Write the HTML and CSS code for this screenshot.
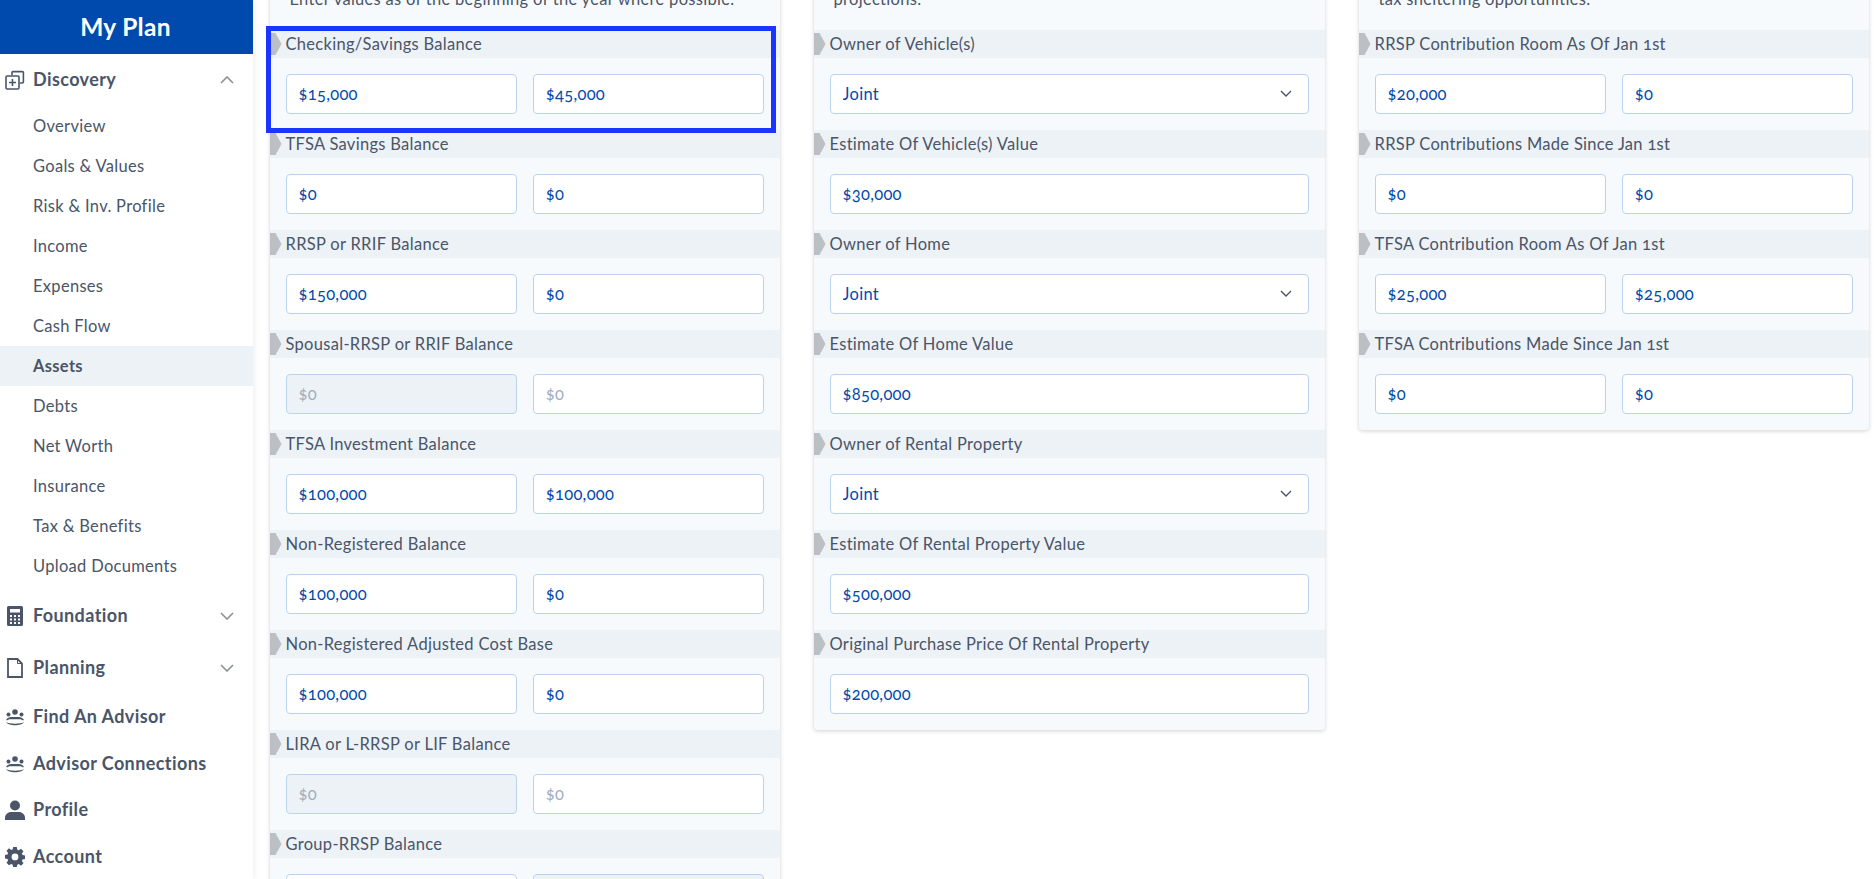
FILE: index.html
```html
<!DOCTYPE html>
<html lang="en">
<head>
    <meta charset="UTF-8">
    <meta name="viewport" content="width=device-width, initial-scale=1.0">
    <title>My Plan - Assets</title>
    <link rel="stylesheet" href="styles.css">
</head>
<body>
    <div class="app">
        <aside class="sidebar">
            <div class="brand">My Plan</div>
            <nav>
                <a class="nav-group">
                    <svg class="nav-icon" viewBox="0 0 20 20" fill="none" stroke="currentColor" stroke-width="1.6"><path d="M7 5V2.600a1 1 0 0 1 1-1h9.400a1 1 0 0 1 1 1V12a1 1 0 0 1-1 1H15"/><rect x="1" y="6" width="13" height="13" rx="1.2"/><path d="M7.500 9v7M4 12.500h7"/></svg>
                    <span>Discovery</span>
                    <svg class="nav-chevron" viewBox="0 0 14 8" fill="none" stroke="currentColor" stroke-width="1.6"><path d="M1 7l6-6 6 6"/></svg>
                </a>
                <a class="nav-item">Overview</a>
                <a class="nav-item">Goals &amp; Values</a>
                <a class="nav-item">Risk &amp; Inv. Profile</a>
                <a class="nav-item">Income</a>
                <a class="nav-item">Expenses</a>
                <a class="nav-item">Cash Flow</a>
                <a class="nav-item active">Assets</a>
                <a class="nav-item">Debts</a>
                <a class="nav-item">Net Worth</a>
                <a class="nav-item">Insurance</a>
                <a class="nav-item">Tax &amp; Benefits</a>
                <a class="nav-item">Upload Documents</a>
                <a class="nav-group foundation">
                    <svg class="nav-icon" viewBox="0 0 20 20" fill="currentColor"><path fill-rule="evenodd" d="M3.500 0h13A1.500 1.500 0 0 1 18 1.500v17a1.500 1.500 0 0 1-1.500 1.500h-13A1.500 1.500 0 0 1 2 18.500v-17A1.500 1.500 0 0 1 3.500 0zM5 3v3.500h10V3zM5 9v2h2V9zm4 0v2h2V9zm4 0v2h2V9zM5 12.500v2h2v-2zm4 0v2h2v-2zm4 0v2h2v-2zM5 16v2h2v-2zm4 0v2h2v-2zm4 0v2h2v-2z"/></svg>
                    <span>Foundation</span>
                    <svg class="nav-chevron" viewBox="0 0 14 8" fill="none" stroke="currentColor" stroke-width="1.6"><path d="M1 1l6 6 6-6"/></svg>
                </a>
                <a class="nav-group">
                    <svg class="nav-icon" viewBox="0 0 20 20" fill="none" stroke="currentColor" stroke-width="1.800"><path d="M3 1h9.500L17 5.500V19H3z"/><path d="M12.500 1v4.500H17" stroke-width="1"/></svg>
                    <span>Planning</span>
                    <svg class="nav-chevron" viewBox="0 0 14 8" fill="none" stroke="currentColor" stroke-width="1.6"><path d="M1 1l6 6 6-6"/></svg>
                </a>
                <a class="nav-link">
                    <svg class="nav-icon" viewBox="0 0 20 20" fill="currentColor"><circle cx="10" cy="5" r="2.800"/><circle cx="3.500" cy="7.500" r="2"/><circle cx="16.500" cy="7.500" r="2"/><path d="M1 13c1-2 3.500-3 5-3h8c1.500 0 4 1 5 3-1 .6-2.200.2-3-.7H4c-.8.900-2 1.300-3 .7z"/><path d="M1 15c2.500 4.400 15.500 4.400 18 0-3 2.200-15 2.200-18 0z"/></svg>
                    <span>Find An Advisor</span>
                </a>
                <a class="nav-link">
                    <svg class="nav-icon" viewBox="0 0 20 20" fill="currentColor"><circle cx="10" cy="5" r="2.800"/><circle cx="3.500" cy="7.500" r="2"/><circle cx="16.500" cy="7.500" r="2"/><path d="M1 13c1-2 3.500-3 5-3h8c1.500 0 4 1 5 3-1 .6-2.200.2-3-.7H4c-.8.900-2 1.300-3 .7z"/><path d="M1 15c2.500 4.400 15.500 4.400 18 0-3 2.200-15 2.200-18 0z"/></svg>
                    <span>Advisor Connections</span>
                </a>
                <a class="nav-link">
                    <svg class="nav-icon" viewBox="0 0 20 20" fill="currentColor"><circle cx="10" cy="5.500" r="5"/><path d="M0 20v-2.500C0 14.500 3 12 6 12h8c3 0 6 2.500 6 5.500V20z"/></svg>
                    <span>Profile</span>
                </a>
                <a class="nav-link">
                    <svg class="nav-icon" viewBox="0 0 20 20" fill="currentColor"><path fill-rule="evenodd" d="M8.200 0h3.600l.5 2.700 1.500.6L16 1.700l2.500 2.500-1.600 2.200.6 1.500 2.500.5v3.600l-2.500.5-.6 1.500 1.600 2.200-2.500 2.500-2.200-1.600-1.500.6-.5 2.300H8.200l-.5-2.300-1.500-.6L4 18.300l-2.500-2.500 1.600-2.200-.6-1.500L0 11.600V8l2.500-.5.6-1.500-1.600-2.200L4 1.300l2.200 1.600 1.500-.6zM10 6.500a3.400 3.400 0 1 0 0 6.800 3.400 3.400 0 0 0 0-6.800z"/></svg>
                    <span>Account</span>
                </a>
            </nav>
        </aside>

        <main class="content">
            <div class="card-grid">
                <section class="card">
                    <p class="card-intro">Enter values as of the beginning of the year where possible.</p>
                    <div class="field highlighted">
                        <div class="field-label">Checking/Savings Balance</div>
                        <div class="field-inputs"><input type="text" value="$15,000"><input type="text" value="$45,000"></div>
                    </div>
                    <div class="field">
                        <div class="field-label">TFSA Savings Balance</div>
                        <div class="field-inputs"><input type="text" value="$0"><input type="text" value="$0"></div>
                    </div>
                    <div class="field">
                        <div class="field-label">RRSP or RRIF Balance</div>
                        <div class="field-inputs"><input type="text" value="$150,000"><input type="text" value="$0"></div>
                    </div>
                    <div class="field">
                        <div class="field-label">Spousal-RRSP or RRIF Balance</div>
                        <div class="field-inputs"><input type="text" placeholder="$0" disabled><input type="text" placeholder="$0"></div>
                    </div>
                    <div class="field">
                        <div class="field-label">TFSA Investment Balance</div>
                        <div class="field-inputs"><input type="text" value="$100,000"><input type="text" value="$100,000"></div>
                    </div>
                    <div class="field">
                        <div class="field-label">Non-Registered Balance</div>
                        <div class="field-inputs"><input type="text" value="$100,000"><input type="text" value="$0"></div>
                    </div>
                    <div class="field">
                        <div class="field-label">Non-Registered Adjusted Cost Base</div>
                        <div class="field-inputs"><input type="text" value="$100,000"><input type="text" value="$0"></div>
                    </div>
                    <div class="field">
                        <div class="field-label">LIRA or L-RRSP or LIF Balance</div>
                        <div class="field-inputs"><input type="text" placeholder="$0" disabled><input type="text" placeholder="$0"></div>
                    </div>
                    <div class="field">
                        <div class="field-label">Group-RRSP Balance</div>
                        <div class="field-inputs"><input type="text" placeholder="$0"><input type="text" placeholder="$0" disabled></div>
                    </div>
                </section>

                <section class="card">
                    <p class="card-intro">projections.</p>
                    <div class="field">
                        <div class="field-label">Owner of Vehicle(s)</div>
                        <div class="field-inputs"><select><option>Joint</option></select></div>
                    </div>
                    <div class="field">
                        <div class="field-label">Estimate Of Vehicle(s) Value</div>
                        <div class="field-inputs"><input type="text" value="$30,000"></div>
                    </div>
                    <div class="field">
                        <div class="field-label">Owner of Home</div>
                        <div class="field-inputs"><select><option>Joint</option></select></div>
                    </div>
                    <div class="field">
                        <div class="field-label">Estimate Of Home Value</div>
                        <div class="field-inputs"><input type="text" value="$850,000"></div>
                    </div>
                    <div class="field">
                        <div class="field-label">Owner of Rental Property</div>
                        <div class="field-inputs"><select><option>Joint</option></select></div>
                    </div>
                    <div class="field">
                        <div class="field-label">Estimate Of Rental Property Value</div>
                        <div class="field-inputs"><input type="text" value="$500,000"></div>
                    </div>
                    <div class="field">
                        <div class="field-label">Original Purchase Price Of Rental Property</div>
                        <div class="field-inputs"><input type="text" value="$200,000"></div>
                    </div>
                </section>

                <section class="card">
                    <p class="card-intro">tax sheltering opportunities.</p>
                    <div class="field">
                        <div class="field-label">RRSP Contribution Room As Of Jan 1st</div>
                        <div class="field-inputs"><input type="text" value="$20,000"><input type="text" value="$0"></div>
                    </div>
                    <div class="field">
                        <div class="field-label">RRSP Contributions Made Since Jan 1st</div>
                        <div class="field-inputs"><input type="text" value="$0"><input type="text" value="$0"></div>
                    </div>
                    <div class="field">
                        <div class="field-label">TFSA Contribution Room As Of Jan 1st</div>
                        <div class="field-inputs"><input type="text" value="$25,000"><input type="text" value="$25,000"></div>
                    </div>
                    <div class="field">
                        <div class="field-label">TFSA Contributions Made Since Jan 1st</div>
                        <div class="field-inputs"><input type="text" value="$0"><input type="text" value="$0"></div>
                    </div>
                </section>
            </div>
        </main>
    </div>
</body>
</html>
```

FILE: styles.css
```css
html,
body {
    height: 100%;
}

body {
    margin: 0;
    overflow: hidden;
    background-color: #fff;
    color: #4a5568;
    font-family: "Lato", "Noto Sans", sans-serif;
    font-size: 16.5px;
    letter-spacing: 0.3px;
    font-variant-numeric: oldstyle-nums;
}

.app {
    display: flex;
    height: 879px;
    overflow: hidden;
}

/* sidebar */
.sidebar {
    flex: 0 0 253px;
    background-color: #fff;
    box-shadow: 2px 0 5px rgba(0, 0, 0, 0.06);
    z-index: 1;
}

.brand {
    height: 54px;
    padding: 0 2px 2px 0;
    box-sizing: border-box;
    display: flex;
    align-items: center;
    justify-content: center;
    background-color: #004aad;
    color: #fff;
    font-size: 24.5px;
    font-weight: 700;
    letter-spacing: 0.3px;
}

.nav-group,
.nav-link {
    display: flex;
    align-items: center;
    padding-left: 5px;
    font-size: 18px;
    font-weight: 700;
    letter-spacing: 0.4px;
}

.nav-group {
    height: 52px;
}

.foundation {
    margin-top: 4px;
}

.nav-link {
    height: 46.5px;
}

.nav-group span,
.nav-link span {
    padding-bottom: 2px;
}

.nav-icon {
    flex: 0 0 20px;
    width: 20px;
    height: 20px;
    margin-right: 8px;
}

.nav-chevron {
    width: 14px;
    height: 8px;
    margin-left: auto;
    margin-right: 19px;
    color: #8a8f96;
}

.nav-item {
    display: flex;
    align-items: center;
    height: 40px;
    box-sizing: border-box;
    padding: 0 0 1px 33px;
}

.nav-item.active {
    background-color: #edf2f7;
    font-weight: 700;
}

/* main column, already scrolled a bit in the screenshot */
.content {
    flex: 1;
    min-width: 0;
    padding-left: 16.5px;
}

.card-grid {
    display: grid;
    grid-template-columns: 510.5px 511.5px 510.5px;
    column-gap: 33.5px;
    align-items: start;
    margin-top: -40px;
}

.card {
    padding-top: 27px;
    background-color: #f7fafc;
    border-radius: 4px;
    box-shadow: 0 1px 4px rgba(0, 0, 0, 0.18);
}

.card-intro {
    margin: 0 0 19px;
    padding: 0 20px;
    line-height: 24px;
}

.field {
    position: relative;
}

.field-label {
    position: relative;
    height: 28px;
    padding-left: 16px;
    line-height: 29px;
    background-color: #edf2f7;
}

.field-label::before {
    content: "";
    position: absolute;
    top: 3px;
    left: 0;
    width: 12px;
    height: 22px;
    background-color: #bcc0c4;
    clip-path: polygon(0 0, 50% 0, 100% 50%, 50% 100%, 0 100%);
}

.field-inputs {
    display: flex;
    gap: 16px;
    padding: 16px;
}

.field-inputs input,
.field-inputs select {
    flex: 1;
    min-width: 0;
    height: 40px;
    box-sizing: border-box;
    padding: 0 12px 1px;
    border: 1px solid #bcd3ee;
    border-radius: 4px;
    background-color: #fff;
    color: #004aad;
    font: inherit;
    letter-spacing: inherit;
    font-variant-numeric: oldstyle-nums;
    outline: none;
}

.field-inputs input::placeholder {
    color: #a0aec0;
    opacity: 1;
}

.field-inputs input:disabled {
    background-color: #edf2f7;
}

.field-inputs select {
    appearance: none;
    background-image: url("data:image/svg+xml,%3Csvg xmlns='http://www.w3.org/2000/svg' viewBox='0 0 12 8'%3E%3Cpath d='M1 1l5 5 5-5' fill='none' stroke='%234a5568' stroke-width='1.400'/%3E%3C/svg%3E");
    background-repeat: no-repeat;
    background-position: right 16px center;
    background-size: 12px 8px;
}

/* the blue annotation box round the first row */
.highlighted {
    z-index: 1;
}

.highlighted::after {
    content: "";
    position: absolute;
    top: -4px;
    left: -4px;
    right: 4px;
    bottom: -3px;
    border: 5px solid #1a35ff;
    pointer-events: none;
}
```
